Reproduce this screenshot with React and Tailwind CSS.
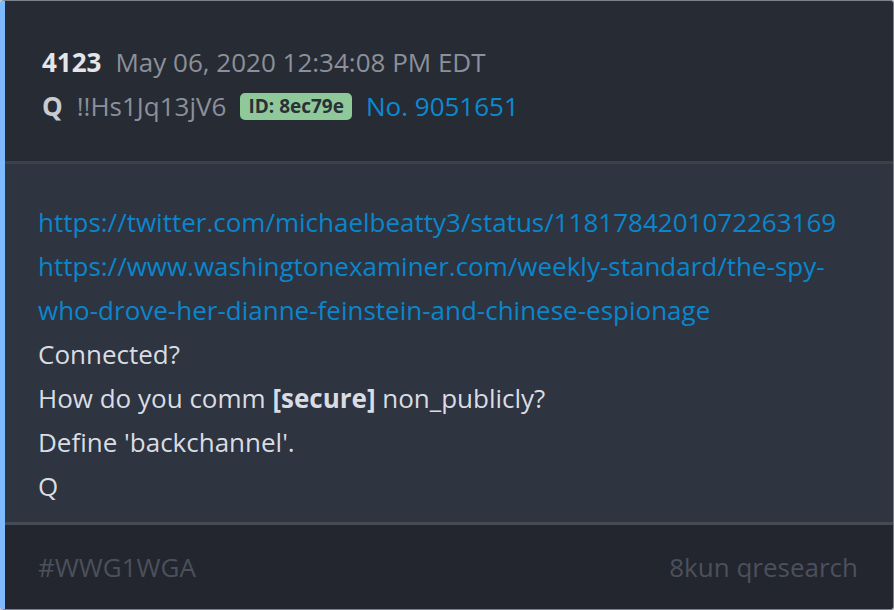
import React from 'react';

const post = {
  num: '4123',
  date: 'May 06, 2020 12:34:08 PM EDT',
  name: 'Q',
  trip: '!!Hs1Jq13jV6',
  id: '8ec79e',
  no: '9051651',
  links: [
    'https://twitter.com/michaelbeatty3/status/1181784201072263169',
    'https://www.washingtonexaminer.com/weekly-standard/the-spy-who-drove-her-dianne-feinstein-and-chinese-espionage',
  ],
};

export default function App() {
  return (
    <div className="w-[894px] h-[610px] bg-[#c9ccd1] font-['Open_Sans',sans-serif]">
      <div className="w-full h-full flex flex-col rounded-[4px] overflow-hidden border border-[#7d828c] border-l-[5px] border-l-[#7fbaff] bg-[#2e3440]">
        <div className="bg-[#272b33] pl-[37px] pt-[39px] pb-[33px] border-b-[3px] border-[#3b414b]">
          <div className="flex items-center h-[44px] text-[26px]">
            <span className="font-bold text-[#e3e5e8]">{post.num}</span>
            <span className="ml-[14px] text-[#8b909b]">{post.date}</span>
          </div>
          <div className="flex items-center h-[44px] text-[26px]">
            <span className="font-bold text-[#c8cbd0]">{post.name}</span>
            <span className="ml-[14px] text-[#8b909b]">{post.trip}</span>
            <span className="ml-[14px] rounded-[5px] bg-[#8fc99a] text-[#2a2f38] font-bold text-[19px] leading-none px-[8px] py-[4px]">
              ID: {post.id}
            </span>
            <span className="ml-[14px] text-[#0a8ad3]">No. {post.no}</span>
          </div>
        </div>
        <div className="flex-1 pl-[33px] pr-[30px] pt-[36px] text-[26px] leading-[44px] text-[#d9dde3]">
          {post.links.map((l) => (
            <div key={l} className="text-[#0a86cc]">{l}</div>
          ))}
          <div>Connected?</div>
          <div>
            How do you comm <span className="font-bold">[secure]</span> non_publicly?
          </div>
          <div>Define 'backchannel'.</div>
          <div>Q</div>
        </div>
        <div className="h-[87px] bg-[#23262e] border-t-[3px] border-[#454b55] flex items-center justify-between pl-[33px] pr-[35px] text-[26px] text-[#4b515c]">
          <span>#WWG1WGA</span>
          <span>8kun qresearch</span>
        </div>
      </div>
    </div>
  );
}
